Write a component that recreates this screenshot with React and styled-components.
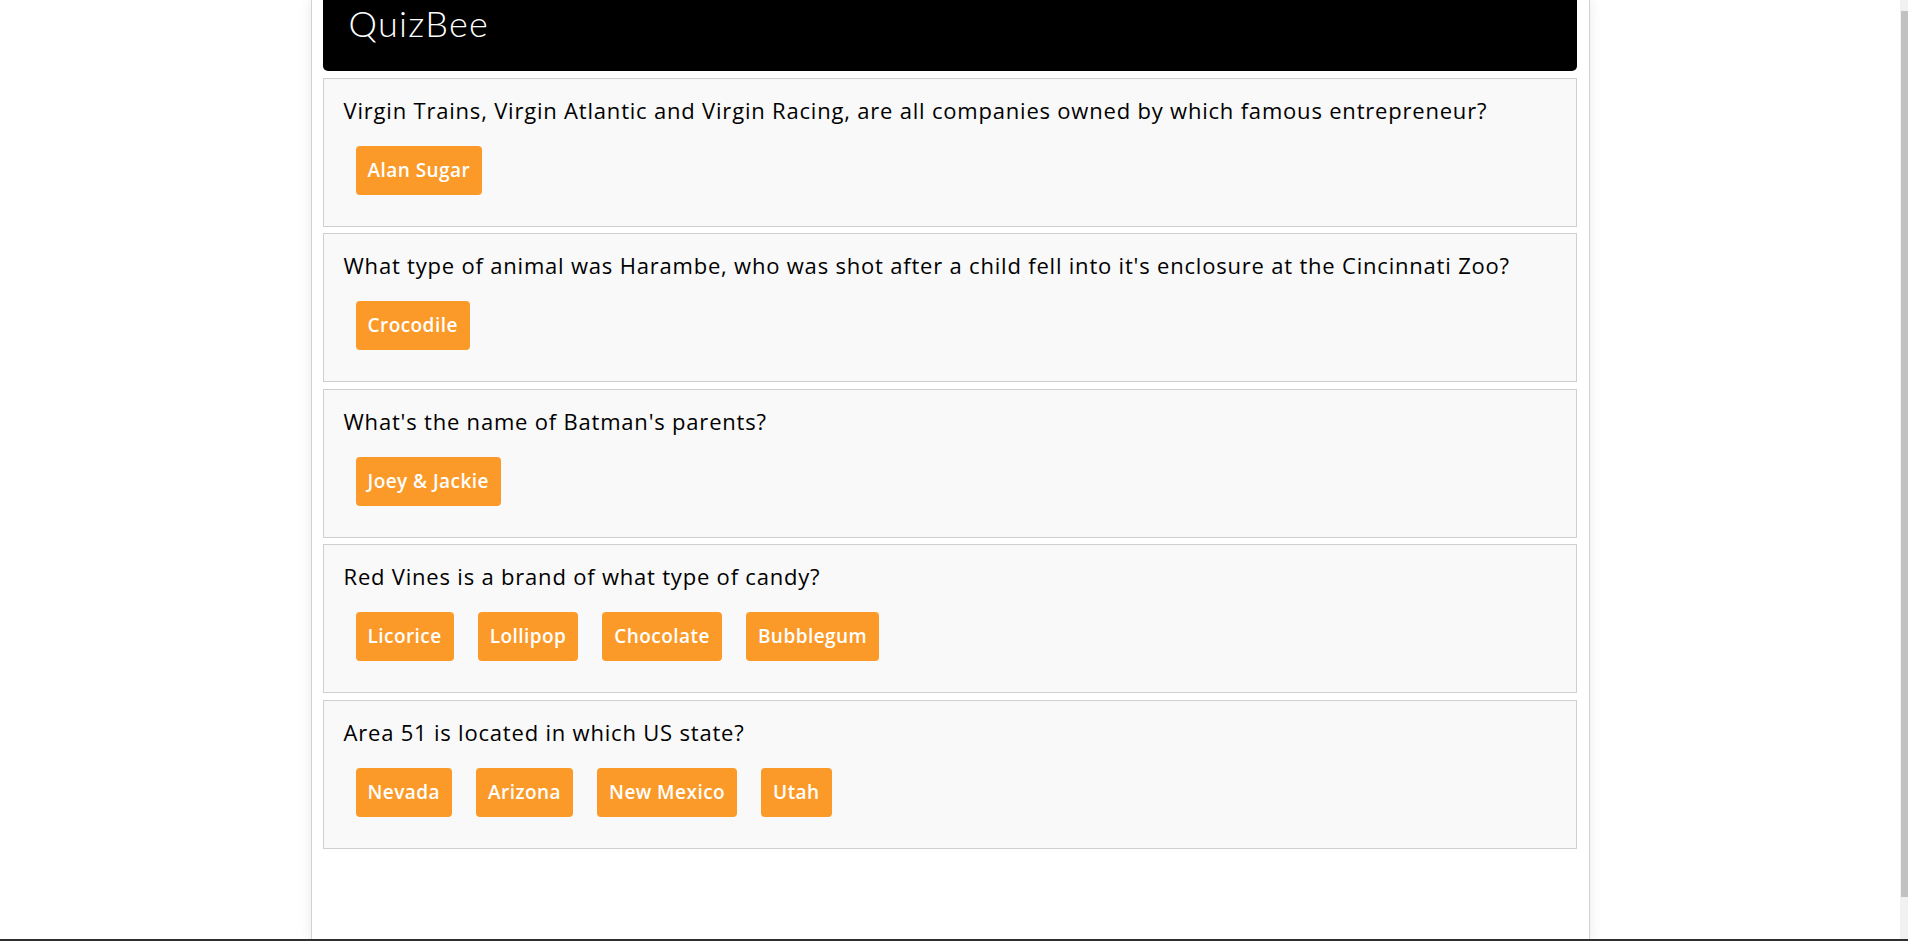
import React from "react";
import styled, { createGlobalStyle } from "styled-components";

const Global = createGlobalStyle`
  html, body { margin: 0; padding: 0; background: #ffffff; }
  body { font-family: "Open Sans", Lato, sans-serif; overflow: hidden; }
  * { box-sizing: border-box; }
`;

const Viewport = styled.div`
  width: calc(100% - 8px);
  min-height: 100vh;
`;

const Container = styled.main`
  width: 1279px;
  min-height: 100vh;
  margin: 0 auto;
  padding: 0 12px 40px 11px;
  border-left: 1px solid #d2d2d2;
  border-right: 1px solid #d2d2d2;
  box-shadow: 0 0 12px rgba(0, 0, 0, 0.09);
  background: #ffffff;
  display: flex;
  flex-direction: column;
  gap: 6.5px;
`;

const Header = styled.header`
  height: 71px;
  background: #000;
  border-radius: 0 0 5px 5px;
  padding: 5px 26px 0;
`;

const Title = styled.h1`
  margin: 0;
  font-family: Lato, sans-serif;
  font-weight: 300;
  font-size: 36px;
  line-height: 36px;
  color: #fff;
  letter-spacing: 1.3px;
`;

const Card = styled.section`
  background: #f9f9f9;
  border: 1px solid #cfcfcf;
  padding: 19px 20px 19px;
`;

const Question = styled.p`
  margin: 0 0 11px;
  font-family: "Open Sans", sans-serif;
  font-size: 22px;
  line-height: 25px;
  color: #000;
  letter-spacing: 0.8px;
`;

const Answers = styled.div`
  display: flex;
  flex-wrap: wrap;
  gap: 24px;
  padding: 12px;
`;

const Answer = styled.button`
  height: 49px;
  padding: 0 12px;
  border: none;
  border-radius: 4px;
  background: #fb9a29;
  color: #fff;
  font-family: "Open Sans", sans-serif;
  font-weight: 600;
  font-size: 19px;
  line-height: 49px;
  letter-spacing: 0.45px;
  cursor: pointer;
`;

const ScrollTrack = styled.div`
  position: fixed;
  top: 0;
  right: 0;
  width: 8px;
  bottom: 2px;
  background: #f1f1f1;
`;

const ScrollThumb = styled.div`
  position: absolute;
  left: 1px;
  right: 0;
  top: 11px;
  height: 886px;
  background: #c1c1c1;
`;

const TaskBar = styled.div`
  position: fixed;
  left: 0;
  right: 0;
  bottom: 0;
  height: 2px;
  background: #2f2f2f;
`;

const quiz = [
  {
    q: "Virgin Trains, Virgin Atlantic and Virgin Racing, are all companies owned by which famous entrepreneur?",
    a: ["Alan Sugar"],
  },
  {
    q: "What type of animal was Harambe, who was shot after a child fell into it's enclosure at the Cincinnati Zoo?",
    a: ["Crocodile"],
  },
  { q: "What's the name of Batman's parents?", a: ["Joey & Jackie"] },
  {
    q: "Red Vines is a brand of what type of candy?",
    a: ["Licorice", "Lollipop", "Chocolate", "Bubblegum"],
  },
  {
    q: "Area 51 is located in which US state?",
    a: ["Nevada", "Arizona", "New Mexico", "Utah"],
  },
];

export default function App() {
  return (
    <>
      <Global />
      <Viewport>
        <Container>
          <Header>
            <Title>QuizBee</Title>
          </Header>
          {quiz.map((item) => (
            <Card key={item.q}>
              <Question>{item.q}</Question>
              <Answers>
                {item.a.map((ans) => (
                  <Answer key={ans}>{ans}</Answer>
                ))}
              </Answers>
            </Card>
          ))}
        </Container>
      </Viewport>
      <ScrollTrack>
        <ScrollThumb />
      </ScrollTrack>
      <TaskBar />
    </>
  );
}
